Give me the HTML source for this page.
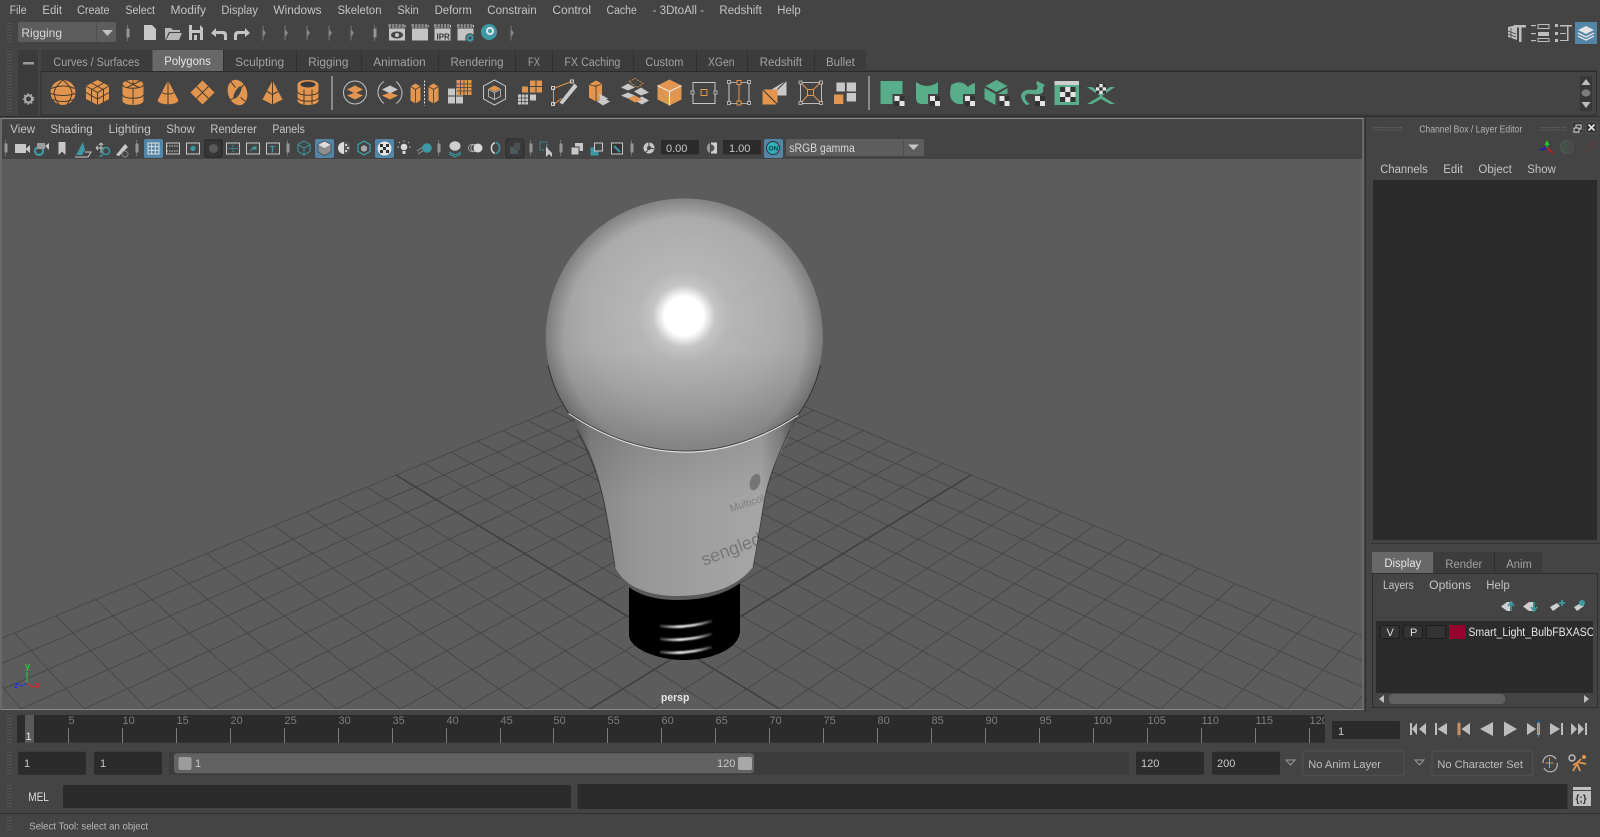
<!DOCTYPE html>
<html><head><meta charset="utf-8"><title>Maya</title>
<style>
html,body{margin:0;padding:0;background:#444;overflow:hidden;width:1600px;height:837px}
svg{display:block;font-family:"Liberation Sans",Arial,sans-serif}
.m{fill:#c4c4c4;font-size:11.5px}
.t{fill:#a2a2a2;font-size:11.5px}
.f{fill:#c8c8c8;font-size:11px}
.n{fill:#7d7d7d;font-size:11px}
</style></head><body>
<svg xmlns="http://www.w3.org/2000/svg" width="1600" height="837" viewBox="0 0 1600 837">
<defs>
<radialGradient id="gl" gradientUnits="userSpaceOnUse" cx="684" cy="316" r="175">
<stop offset="0" stop-color="#fff"/><stop offset=".112" stop-color="#fff"/><stop offset=".14" stop-color="#e6e6e6"/><stop offset=".18" stop-color="#c4c4c4"/><stop offset=".26" stop-color="#b6b6b6"/><stop offset=".55" stop-color="#acacac"/><stop offset=".8" stop-color="#9a9a9a"/><stop offset="1" stop-color="#868686"/>
</radialGradient>
<linearGradient id="gd" gradientUnits="userSpaceOnUse" x1="0" y1="350" x2="0" y2="470"><stop offset="0" stop-color="#000" stop-opacity="0"/><stop offset="1" stop-color="#000" stop-opacity=".2"/></linearGradient>
<radialGradient id="ge" gradientUnits="userSpaceOnUse" cx="684.3" cy="337" r="138.5"><stop offset=".86" stop-color="#000" stop-opacity="0"/><stop offset="1" stop-color="#000" stop-opacity=".2"/></radialGradient>
<linearGradient id="nk" gradientUnits="userSpaceOnUse" x1="568" y1="0" x2="798" y2="0"><stop offset="0" stop-color="#555"/><stop offset=".1" stop-color="#868686"/><stop offset=".3" stop-color="#969696"/><stop offset=".6" stop-color="#a0a0a0"/><stop offset=".84" stop-color="#a6a6a6"/><stop offset=".93" stop-color="#868686"/><stop offset="1" stop-color="#4a4a4a"/></linearGradient>
<linearGradient id="nk2" gradientUnits="userSpaceOnUse" x1="0" y1="430" x2="0" y2="500"><stop offset="0" stop-color="#000" stop-opacity=".1"/><stop offset="1" stop-color="#000" stop-opacity="0"/></linearGradient>
<linearGradient id="th" gradientUnits="userSpaceOnUse" x1="655" y1="0" x2="715" y2="0"><stop offset="0" stop-color="#fff" stop-opacity="0"/><stop offset=".4" stop-color="#e8e8e8"/><stop offset=".65" stop-color="#d8d8d8"/><stop offset="1" stop-color="#fff" stop-opacity="0"/></linearGradient>
<filter id="bl" x="-20%" y="-200%" width="140%" height="500%"><feGaussianBlur stdDeviation=".8"/></filter>
<clipPath id="cv"><rect x="2" y="159" width="1360" height="550"/></clipPath>
<clipPath id="cn"><path d="M568.5,413 Q684,489.4 798,415 C790,440 772,460 765,497 C759,530 757,550 753,567 C735,590 705,596 677,596 C650,596 625,588 615,567 C611,540 608,520 603,497 C596,460 585,440 568.5,413Z"/></clipPath>
<clipPath id="ct"><rect x="17" y="715" width="1308" height="28"/></clipPath>
<clipPath id="cl"><rect x="1376" y="621" width="217" height="30"/></clipPath>

<g id="s1"><circle r="12.5" fill="#e2954e"/><g fill="none" stroke="#4a3a2c" stroke-width="1"><path d="M-11.5,-4 Q0,-9 11.5,-4 M-12.5,1 Q0,5 12.5,1 M-10,7 Q0,11 10,7 M0,-12.5 Q-9,-5 -9,1 Q-8,7 -4,12 M0,-12.5 Q9,-5 9,1 Q8,7 4,12"/></g></g>
<g id="s2"><path d="M0,-12.5 L11.5,-6.5 V6.5 L0,12.5 L-11.5,6.5 V-6.5Z" fill="#e2954e"/><path d="M-11.5,-6.5 L0,0 L11.5,-6.5 M0,0 V12.5 M-6,-9.5 L5.5,-3 M6,-9.5 L-5.5,-3 M-11.5,0 L0,6.5 L11.5,0 M-6,-3 V9.5 M6,-3 V9.5" fill="none" stroke="#4a3a2c" stroke-width="1"/></g>
<g id="s3"><path d="M-10.5,-8 C-10.5,-14 10.5,-14 10.5,-8 V8 C10.5,14 -10.5,14 -10.5,8Z" fill="#e2954e"/><path d="M-10.5,-8 C-10.5,-3 10.5,-3 10.5,-8 M-10.5,2 C-10.5,7 10.5,7 10.5,2 M0,-5 V12 M0,-8 L-7,-11.5 M0,-8 L7,-11.5 M0,-8 V-12 M0,-8 L-6,-5 M0,-8 L6,-5" fill="none" stroke="#4a3a2c" stroke-width="1"/></g>
<g id="s4"><path d="M0,-12 L10.5,8 C9,13 -9,13 -10.5,8Z" fill="#e2954e"/><path d="M0,-12 V12 M-6,0 C-3,2 3,2 6,0" fill="none" stroke="#4a3a2c" stroke-width="1"/></g>
<g id="s5"><path d="M0,-12 L12,0 L0,12 L-12,0Z" fill="#e2954e"/><path d="M-6,-6 L6,6 M6,-6 L-6,6" stroke="#4a3a2c" stroke-width="1"/></g>
<g id="s6"><ellipse rx="9.5" ry="13" transform="rotate(-18)" fill="#e2954e"/><ellipse rx="2.5" ry="7" transform="rotate(30)" fill="#444"/><path d="M-7,-11 L-2,-5 M8,-10 L3,-4 M-8,8 L-3,5 M3,5 L8,9" stroke="#4a3a2c" stroke-width="1" fill="none"/></g>
<g id="s7"><path d="M0,-12 L10,7 L0,12 L-10,7Z" fill="#e2954e"/><path d="M0,-12 V12 M-5.5,-1 L0,2 L5.5,-1" fill="none" stroke="#4a3a2c" stroke-width="1"/></g>
<g id="s8"><path d="M-10.5,-8 C-10.5,-14 10.5,-14 10.5,-8 V8 C10.5,14 -10.5,14 -10.5,8Z" fill="#e2954e"/><ellipse cy="-8" rx="7.5" ry="3" fill="#3a3a3a"/><path d="M-10.5,-1 C-10.5,4 10.5,4 10.5,-1 M-10.5,5 C-10.5,10 10.5,10 10.5,5 M-4,-3 V12 M4,-3 V12" fill="none" stroke="#4a3a2c" stroke-width="1"/></g>
<g id="a1"><circle r="11.5" fill="none" stroke="#c4c4c4" stroke-width="1"/><path d="M0,-7 L8,-3 L0,1 L-8,-3Z" fill="#e2954e"/><path d="M0,0 L8,3 L0,7 L-8,3Z" fill="#e2954e"/></g>
<g id="a2"><path d="M-6,-11 A12,12 0 0 0 -10,6 M6,11 A12,12 0 0 0 10,-6 M-6,11 A12,12 0 0 1 -10,6 M6,-11 A12,12 0 0 1 10,-6" fill="none" stroke="#c4c4c4" stroke-width="1"/><path d="M0,-7 L8,-3 L0,1 L-8,-3Z" fill="#c8c8c8"/><path d="M0,0 L8,3 L0,7 L-8,3Z" fill="#e2954e"/></g>
<g id="a3"><path d="M-14,-6 L-9,-9 L-4,-6 V8 L-9,11 L-14,8Z M4,-6 L9,-9 L14,-6 V8 L9,11 L4,8Z" fill="#e2954e"/><path d="M-9,-3 V11 M9,-3 V11 M-14,-6 L-9,-3 L-4,-6 M4,-6 L9,-3 L14,-6" stroke="#4a3a2c" stroke-width=".8" fill="none"/><path d="M0,-12 V13" stroke="#ddd" stroke-width="1" stroke-dasharray="2 1.5"/></g>
<g id="a4"><rect x="-12" y="-4" width="15" height="15" fill="#c8c8c8"/><path d="M-4.5,-4 V11 M-12,3.5 H3" stroke="#444" stroke-width="1"/><rect x="-3.5" y="-12.5" width="15" height="15" fill="#e2954e"/><path d="M.5,-12.5 V2.5 M4,-12.5 V2.5 M7.5,-12.5 V2.5 M-3.5,-8.5 H11.5 M-3.5,-5 H11.5 M-3.5,-1.5 H11.5" stroke="#444" stroke-width=".8"/></g>
<g id="a5"><path d="M0,-12.5 L11,-6.5 V6.5 L0,12.5 L-11,6.5 V-6.5Z" fill="none" stroke="#c4c4c4" stroke-width="1"/><path d="M0,-7 L6,-4 L0,-1 L-6,-4Z" fill="#e2954e"/><path d="M-6,-3 L0,0 V7 L-6,4Z M6,-3 L0,0 V7 L6,4Z" fill="none" stroke="#c4c4c4" stroke-width=".8"/></g>
<g id="a6"><path d="M0,-12 H12 V0 H0Z M-2,-6 H-8 V0 H-2Z" fill="#e2954e"/><path d="M6,-12 V0 M0,-6 H12" stroke="#444"/><path d="M-12,2 H-2 V12 H-12Z M0,2 H6 V8 H0Z" fill="#c8c8c8"/><path d="M-8.5,2 V12 M-5,2 V12 M-12,5.5 H-2 M-12,9 H-2" stroke="#444" stroke-width=".8"/></g>
<g id="a7"><path d="M-12,-4 L6,-11 M-12,-4 V12 L-4,6" fill="none" stroke="#e2954e" stroke-width="1"/><path d="M-6,10 L9,-9 L12,-6 L-3,12Z" fill="#ccc"/><rect x="-14" y="-6" width="3" height="3" fill="none" stroke="#ccc"/><rect x="5" y="-12.5" width="3" height="3" fill="none" stroke="#ccc"/><rect x="-14" y="10" width="3" height="3" fill="none" stroke="#ccc"/></g>
<g id="a8"><path d="M-11,-8 L-4,-12 L2,-9 V6 L-4,9 L-11,5Z" fill="#e2954e"/><path d="M-4,-8 V9 M-11,-8 L-4,-6 L2,-9" stroke="#4a3a2c" fill="none" stroke-width=".8"/><path d="M3,5 L10,9 L3,13 L-3,9Z" fill="#c8c8c8"/><path d="M-1,1 L8,6 L1,10" fill="#c8c8c8"/></g>
<g id="a9"><path d="M-14,-5 L-7,-9 L0,-5 L-7,-2Z M-1,-1 L6,-5 L14,0 L6,3Z M-14,3 L-7,0 L0,3 L-7,6Z M0,8 L7,4 L14,8 L7,12Z" fill="#c8c8c8"/><path d="M-6,-11 L0,-14 L8,-9 L2,-5Z" fill="none" stroke="#e2954e" stroke-width=".8" stroke-dasharray="2 1"/><path d="M-7,6 L0,3 L7,7 L0,10Z" fill="#e2954e"/></g>
<g id="a10"><path d="M0,-13 L12,-7 V7 L0,13 L-12,7 V-7Z" fill="#e2954e"/><path d="M-12,-7 L0,-1 L12,-7 M0,-1 V13" stroke="#e8e8e8" stroke-width="1.2" fill="none"/></g>
<g id="a11"><rect x="-11" y="-10" width="22" height="21" fill="none" stroke="#c8c8c8"/><rect x="-3" y="-3" width="6" height="6" fill="none" stroke="#e2954e"/><rect x="-13" y="-1.5" width="3" height="3" fill="#444" stroke="#c8c8c8" stroke-width=".8"/><rect x="10" y="-1.5" width="3" height="3" fill="#444" stroke="#c8c8c8" stroke-width=".8"/></g>
<g id="a12"><path d="M-10,-10 V11 M10,-10 V11" stroke="#c8c8c8"/><path d="M0,-8 V9" stroke="#e2954e"/><g fill="#444" stroke="#c8c8c8" stroke-width=".8"><rect x="-11.5" y="-12" width="3" height="3"/><rect x="8.5" y="-12" width="3" height="3"/><rect x="-11.5" y="9" width="3" height="3"/><rect x="8.5" y="9" width="3" height="3"/></g><rect x="-2" y="-12" width="4" height="4" fill="#444" stroke="#e2954e"/><rect x="-2" y="8.5" width="4" height="4" fill="#444" stroke="#e2954e"/><path d="M-9,-10 H-2 M2,-10 H9 M-9,11 H-2 M2,11 H9" stroke="#c8c8c8" stroke-width=".8"/></g>
<g id="a13"><path d="M-12,-3 V12 H3 V-3Z" fill="#e2954e"/><path d="M-12,-3 L3,12" stroke="#333"/><path d="M-3,-3 L12,-12 V3 H3 V-3Z" fill="#c8c8c8"/><path d="M3,-3 L12,-12" stroke="#444"/></g>
<g id="a14"><rect x="-10" y="-10" width="21" height="21" fill="none" stroke="#c8c8c8" stroke-width=".9"/><path d="M-9,-9 L-3,-3 M9,-9 L3,-3 M-9,10 L-3,3 M10,10 L3,3" stroke="#e2954e"/><rect x="-3" y="-3" width="6" height="6" fill="none" stroke="#e2954e"/><g fill="#444" stroke="#c8c8c8" stroke-width=".8"><rect x="-11.5" y="-11.5" width="3" height="3"/><rect x="9" y="-11.5" width="3" height="3"/><rect x="-11.5" y="9" width="3" height="3"/><rect x="9" y="9" width="3" height="3"/></g></g>
<g id="a15"><rect x="-8.6" y="-10" width="8.5" height="9" fill="#c8c8c8"/><rect x="1.7" y="-10" width="9.3" height="9" fill="#c8c8c8"/><rect x="1.7" y="0.5" width="9.3" height="8.5" fill="#c8c8c8"/><rect x="-11" y="2" width="9.3" height="9.5" fill="#e2954e"/></g>
<g id="ck"><rect width="5" height="5" fill="#e4e4e4"/><rect x="5" y="5" width="5" height="5" fill="#e4e4e4"/><rect x="5" width="5" height="5" fill="#333"/><rect y="5" width="5" height="5" fill="#333"/></g>
<g id="b1"><path d="M-11,-12 H11 V11 H-11Z" fill="#58ae8a"/><rect x="1" y="1" width="11" height="11" fill="#444"/><use href="#ck" x="3" y="3"/></g>
<g id="b2"><path d="M-11,-11 Q0,-3 11,-11 V11 H-5 Q-11,11 -11,5Z" fill="#58ae8a"/><rect x="1" y="1" width="11" height="11" fill="#444"/><use href="#ck" x="3" y="3"/></g>
<g id="b3"><path d="M-11,-8 Q-1,-14 6,-6 Q9,-9 13,-10 V11 H-4 Q-12,9 -12,0Z" fill="#58ae8a"/><rect x="1" y="1" width="13" height="11" fill="#444"/><use href="#ck" x="3" y="3"/></g>
<g id="b4"><path d="M0,-13 L11,-7 L0,-1 L-11,-7Z M-12,-5 L-1,1 V12 L-12,6Z M1,1 L11,-5 V1 H1Z" fill="#58ae8a"/><use href="#ck" x="3" y="3"/></g>
<g id="b5"><path d="M-12,2 C-8,-7 2,-1 4,-4 C6,-7 2,-9 4,-12 L12,-8 C8,-5 12,-2 9,0 C2,4 -7,-3 -8,4 C-8,7 -6,9 -3,11 L-6,12 C-9,11 -12,6 -12,2Z" fill="#58ae8a"/><use href="#ck" x="2" y="3"/></g>
<g id="b6"><rect x="-12.5" y="-12" width="24.5" height="24" fill="#58ae8a"/><rect x="-12.5" y="-12" width="24.5" height="4" fill="#cfcfcf"/><rect x="-7" y="-6" width="15.5" height="15" fill="#e4e4e4"/><rect x="-7" y="-6" width="5.2" height="5" fill="#333"/><rect x="3.3" y="-6" width="5.2" height="5" fill="#333"/><rect x="-1.8" y="-1" width="5.2" height="5" fill="#333"/><rect x="-7" y="4" width="5.2" height="5" fill="#333"/><rect x="3.3" y="4" width="5.2" height="5" fill="#333"/></g>
<g id="b7"><path d="M-14,-8 H-9 L0,-2 L9,-8 H14 L1,1 L14,9 H9 L0,4 L-9,9 H-14 L-1,1Z" fill="#58ae8a"/><rect x="-5" y="-11" width="10" height="10" fill="#e4e4e4"/><rect x="-5" y="-11" width="3.3" height="3.3" fill="#333"/><rect x="1.7" y="-11" width="3.3" height="3.3" fill="#333"/><rect x="-1.7" y="-7.7" width="3.3" height="3.3" fill="#333"/><rect x="-5" y="-4.4" width="3.3" height="3.3" fill="#333"/><rect x="1.7" y="-4.4" width="3.3" height="3.3" fill="#333"/></g>
<g id="h1"><path d="M0,-7.5 V7.5" stroke="#777"/><path d="M0,-4 L3,0 L0,4Z" fill="#888"/></g>
<g id="h2"><path d="M.5,-8 V8" stroke="#6f6f6f"/><rect x="-.5" y="-4.5" width="3" height="9" fill="#969696"/></g>
<g id="cb"><path d="M-8,-8 H8 V-6 H-8Z" fill="none" stroke="#ccc" stroke-width="1" stroke-dasharray="2.2 1"/><rect x="-8" y="-4.5" width="16" height="12" fill="#c4c4c4"/></g>
</defs>

<rect width="1600" height="837" fill="#444"/>

<!-- Top menu -->
<g lengthAdjust="spacingAndGlyphs">
<text class="m" x="9.6" y="14" textLength="17" lengthAdjust="spacingAndGlyphs">File</text>
<text class="m" x="42.4" y="14" textLength="19.6" lengthAdjust="spacingAndGlyphs">Edit</text>
<text class="m" x="77.1" y="14" textLength="32.4" lengthAdjust="spacingAndGlyphs">Create</text>
<text class="m" x="125.4" y="14" textLength="29.6" lengthAdjust="spacingAndGlyphs">Select</text>
<text class="m" x="170.5" y="14" textLength="35.5" lengthAdjust="spacingAndGlyphs">Modify</text>
<text class="m" x="221.4" y="14" textLength="36.5" lengthAdjust="spacingAndGlyphs">Display</text>
<text class="m" x="273.4" y="14" textLength="48.2" lengthAdjust="spacingAndGlyphs">Windows</text>
<text class="m" x="337.5" y="14" textLength="44" lengthAdjust="spacingAndGlyphs">Skeleton</text>
<text class="m" x="397.4" y="14" textLength="21.4" lengthAdjust="spacingAndGlyphs">Skin</text>
<text class="m" x="434.6" y="14" textLength="37.2" lengthAdjust="spacingAndGlyphs">Deform</text>
<text class="m" x="487.3" y="14" textLength="49.3" lengthAdjust="spacingAndGlyphs">Constrain</text>
<text class="m" x="552.4" y="14" textLength="38.6" lengthAdjust="spacingAndGlyphs">Control</text>
<text class="m" x="606.5" y="14" textLength="30.3" lengthAdjust="spacingAndGlyphs">Cache</text>
<text class="m" x="652.6" y="14" textLength="51.4" lengthAdjust="spacingAndGlyphs">- 3DtoAll -</text>
<text class="m" x="719.4" y="14" textLength="42.4" lengthAdjust="spacingAndGlyphs">Redshift</text>
<text class="m" x="777.3" y="14" textLength="23.4" lengthAdjust="spacingAndGlyphs">Help</text>
</g>

<!-- status line -->
<path d="M8,23 V42 M11,23 V42 M8,51 V112 M11,51 V112" stroke="#6c6c6c" stroke-dasharray="1 2"/>
<rect x="18" y="22" width="98" height="20" rx="2" fill="#5d5d5d"/><rect x="96" y="22" width="1" height="20" fill="#505050"/>
<text class="m" style="fill:#d8d8d8;font-size:12px" x="21.4" y="37" textLength="40.6" lengthAdjust="spacingAndGlyphs">Rigging</text>
<path d="M102,30 H113 L107.5,36Z" fill="#c0c0c0"/>
<use href="#h2" x="127" y="33"/>
<path d="M144,25 H152 L156,29 V40 H144Z" fill="#c8c8c8"/>
<path d="M165,28 H171 L173,30 H180 V32 H169 L165,40Z M170,33 H182 L179,40 H166Z" fill="#b8b8b8"/>
<path d="M189,25 H200 L203,28 V40 H189Z" fill="#c4c4c4"/><rect x="192" y="25" width="8" height="5" fill="#444"/><rect x="192" y="33" width="8" height="7" fill="#444"/><rect x="194" y="35" width="3" height="5" fill="#c4c4c4"/>
<path d="M211,33 L216,28 V31 H223 Q227,31 227,35 V40 H224 V36 Q224,34 222,34 H216 V37Z" fill="#c4c4c4"/>
<path d="M250,33 L245,28 V31 H238 Q234,31 234,35 V40 H237 V36 Q237,34 239,34 H245 V37Z" fill="#c4c4c4"/>
<use href="#h1" x="263" y="33"/><use href="#h1" x="285" y="33"/><use href="#h1" x="307" y="33"/><use href="#h1" x="329" y="33"/><use href="#h1" x="351" y="33"/>
<use href="#h2" x="374" y="33"/>
<use href="#cb" x="397" y="33"/><ellipse cx="397" cy="35" rx="6" ry="3.5" fill="#444"/><circle cx="397" cy="35" r="2" fill="#c4c4c4"/>
<use href="#cb" x="420" y="33"/>
<use href="#cb" x="442.5" y="33"/><text x="436.5" y="39.5" style="font-size:8px;fill:#333;font-weight:bold">IPR</text>
<use href="#cb" x="465.5" y="33"/><circle cx="470" cy="38" r="4.2" fill="#3d9aa5" stroke="#444"/><circle cx="470" cy="38" r="1.5" fill="#444"/>
<circle cx="489" cy="32" r="8" fill="#3d9aa5"/><circle cx="490" cy="31" r="4" fill="#e4e4e4"/><circle cx="490" cy="31" r="2" fill="#3d9aa5"/>
<use href="#h1" x="511" y="33"/>

<!-- workspace icons -->
<g fill="#bdbdbd"><path d="M1508,27 L1517,25 V40 L1508,37Z"/><rect x="1514" y="25" width="12" height="2.5"/><rect x="1519" y="27" width="2.5" height="15"/></g>
<path d="M1508,31 L1516,34 M1508,34 L1516,37 M1511,28 V39" stroke="#444" stroke-width=".8"/>
<g fill="#bdbdbd"><rect x="1531" y="25" width="5" height="1.2"/><rect x="1538" y="24.5" width="11" height="4" fill="none" stroke="#bdbdbd"/><rect x="1531" y="33" width="5" height="1.2"/><rect x="1538" y="32" width="11" height="4"/><rect x="1531" y="40" width="5" height="1.2"/><rect x="1538" y="38.5" width="11" height="3" fill="none" stroke="#bdbdbd"/></g>
<g fill="#bdbdbd"><rect x="1555" y="24" width="3" height="3"/><rect x="1555" y="32" width="3" height="3"/><rect x="1555" y="39" width="3" height="3"/><rect x="1560" y="25" width="12" height="1.5"/><rect x="1567" y="25" width="1.5" height="16"/><rect x="1560" y="33" width="6" height="1"/><rect x="1560" y="40" width="7" height="1"/></g>
<rect x="1575" y="22" width="22" height="22" fill="#5285a6"/>
<path d="M1586,26 L1594,30 L1586,34 L1578,30Z" fill="#e4e4e4"/><path d="M1578,33 L1586,37 L1594,33 M1578,36 L1586,40 L1594,36" fill="none" stroke="#e4e4e4" stroke-width="1.3"/>

<!-- Shelf -->
<rect x="18" y="50" width="20" height="65" fill="#3b3b3b"/>
<rect x="23" y="62" width="11" height="2.5" fill="#9a9a9a"/>
<circle cx="28.5" cy="99" r="3.6" fill="none" stroke="#a8a8a8" stroke-width="2.2"/><circle cx="28.5" cy="99" r="5.2" fill="none" stroke="#a8a8a8" stroke-width="1.2" stroke-dasharray="1.6 2.2"/>
<rect x="41" y="71" width="1555.5" height="44" fill="#444" stroke="#2f2f2f"/>
<path d="M41,50 H866 V71 H41Z" fill="#3c3c3c"/>
<rect x="152.5" y="50" width="71" height="21" fill="#686868"/>
<g stroke="#303030"><path d="M223.5,50V71M296.5,50V71M361.5,50V71M438.5,50V71M515.5,50V71M552.5,50V71M633.5,50V71M696.5,50V71M747.5,50V71M814.5,50V71"/></g>
<path d="M41,71.5 H1596" stroke="#2c2c2c"/>
<text class="t" x="53.4" y="66" textLength="86" lengthAdjust="spacingAndGlyphs">Curves / Surfaces</text>
<text class="t" style="fill:#e6e6e6" x="164.3" y="65" textLength="46.5" lengthAdjust="spacingAndGlyphs">Polygons</text>
<text class="t" x="235.2" y="66" textLength="49" lengthAdjust="spacingAndGlyphs">Sculpting</text>
<text class="t" x="308.2" y="66" textLength="40.3" lengthAdjust="spacingAndGlyphs">Rigging</text>
<text class="t" x="373.3" y="66" textLength="52.4" lengthAdjust="spacingAndGlyphs">Animation</text>
<text class="t" x="450.5" y="66" textLength="53" lengthAdjust="spacingAndGlyphs">Rendering</text>
<text class="t" x="528" y="66" textLength="12" lengthAdjust="spacingAndGlyphs">FX</text>
<text class="t" x="564.4" y="66" textLength="56" lengthAdjust="spacingAndGlyphs">FX Caching</text>
<text class="t" x="645.4" y="66" textLength="38" lengthAdjust="spacingAndGlyphs">Custom</text>
<text class="t" x="708" y="66" textLength="26.5" lengthAdjust="spacingAndGlyphs">XGen</text>
<text class="t" x="759.7" y="66" textLength="42.4" lengthAdjust="spacingAndGlyphs">Redshift</text>
<text class="t" x="826" y="66" textLength="28.8" lengthAdjust="spacingAndGlyphs">Bullet</text>
<use href="#s1" x="63" y="92.5"/><use href="#s2" x="97.5" y="92.5"/><use href="#s3" x="133" y="92.5"/><use href="#s4" x="168" y="92.5"/><use href="#s5" x="202.5" y="92.5"/><use href="#s6" x="237.5" y="92.5"/><use href="#s7" x="272.5" y="92.5"/><use href="#s8" x="308" y="92.5"/>
<rect x="331" y="76" width="2" height="34" fill="#8a8a8a"/>
<use href="#a1" x="355" y="92.5"/><use href="#a2" x="390" y="92.5"/><use href="#a3" x="424.5" y="92.5"/><use href="#a4" x="460" y="92.5"/><use href="#a5" x="494.5" y="92.5"/><use href="#a6" x="530" y="92.5"/><use href="#a7" x="565.5" y="92.5"/><use href="#a8" x="600" y="92.5"/><use href="#a9" x="635" y="92.5"/><use href="#a10" x="669.5" y="92.5"/><use href="#a11" x="704" y="92.5"/><use href="#a12" x="739" y="92.5"/><use href="#a13" x="774.5" y="92.5"/><use href="#a14" x="810.5" y="92.5"/><use href="#a15" x="845" y="92.5"/>
<rect x="868" y="76" width="2" height="34" fill="#8a8a8a"/>
<use href="#b1" x="891.5" y="93"/><use href="#b2" x="927" y="93"/><use href="#b3" x="962" y="93"/><use href="#b4" x="996.5" y="93"/><use href="#b5" x="1033" y="93"/><use href="#b6" x="1067" y="93"/><use href="#b7" x="1101" y="95"/>
<rect x="1580" y="76" width="12" height="35" fill="#383838"/>
<path d="M1581.5,85 L1586,79 L1590.5,85Z M1581.5,102 L1586,108 L1590.5,102Z" fill="#bdbdbd"/><ellipse cx="1586" cy="93" rx="4.5" ry="3.6" fill="#7c7c7c"/>

<!-- viewport frame -->
<rect x="1" y="118.5" width="1362" height="591" fill="#444" stroke="#888" stroke-width="1.1"/>
<rect x="2" y="159" width="1360" height="550" fill="#5c5c5c"/>
<path d="M1365.5,117 V712" stroke="#2e2e2e"/>
<path d="M0,116.5 H1600" stroke="#2d2d2d"/>
<text class="m" x="10.3" y="133" textLength="24.8" lengthAdjust="spacingAndGlyphs">View</text>
<text class="m" x="50.3" y="133" textLength="42.4" lengthAdjust="spacingAndGlyphs">Shading</text>
<text class="m" x="108.5" y="133" textLength="42.4" lengthAdjust="spacingAndGlyphs">Lighting</text>
<text class="m" x="166.3" y="133" textLength="28.6" lengthAdjust="spacingAndGlyphs">Show</text>
<text class="m" x="210.4" y="133" textLength="46.5" lengthAdjust="spacingAndGlyphs">Renderer</text>
<text class="m" x="272.4" y="133" textLength="32.4" lengthAdjust="spacingAndGlyphs">Panels</text>
<!-- viewport toolbar -->
<use href="#h2" x="5" y="148"/>
<rect x="15" y="144" width="11" height="9" fill="#c8c8c8"/><path d="M26,148.5 L30,145 V153 L26,149.5Z" fill="#c8c8c8"/>
<circle cx="39" cy="151" r="4" fill="none" stroke="#3d9aa5" stroke-width="2.2"/><rect x="37" y="143" width="8" height="6" fill="#9a9a9a"/><path d="M45,146 L49,143 V150Z" fill="#c8c8c8"/>
<path d="M58.5,142 H65.5 V155 L62,151.5 L58.5,155Z" fill="#c8c8c8"/>
<path d="M76,155 L83,142 L85,150 L82,155Z" fill="#3d9aa5"/><path d="M75,157 L88,157 L91,152 L85,152" fill="none" stroke="#c8c8c8"/>
<path d="M96,148 H105 M101,143 V153 M96,148 l2,-2 M96,148 l2,2 M101,143 l-2,2 M101,143 l2,2" stroke="#c8c8c8" fill="none"/><circle cx="106" cy="151" r="3.5" fill="none" stroke="#3d9aa5" stroke-width="1.5"/><path d="M103,154 L100,157" stroke="#3d9aa5" stroke-width="1.5"/>
<path d="M116,155 L125,144 L128,147 L119,156Z" fill="#c8c8c8"/><circle cx="125" cy="154" r="3" fill="none" stroke="#888"/>
<use href="#h2" x="136" y="148"/>
<rect x="144" y="139" width="19" height="19" rx="2" fill="#5285a6"/><rect x="148" y="143" width="11" height="11" fill="none" stroke="#e4e4e4"/><path d="M151.7,143V154M155.3,143V154M148,146.7H159M148,150.3H159" stroke="#e4e4e4" stroke-width=".9"/>
<rect x="166.5" y="143" width="13" height="11" fill="none" stroke="#c8c8c8"/><path d="M166.5,146 H179.5 M166.5,151 H179.5" stroke="#c8c8c8" stroke-dasharray="1.5 1"/>
<rect x="186.5" y="143" width="13" height="11" fill="none" stroke="#c8c8c8"/><circle cx="193" cy="148.5" r="2.5" fill="#3d9aa5"/>
<rect x="204" y="139" width="19" height="19" rx="2" fill="#363636"/><rect x="205" y="140" width="17" height="17" rx="2" fill="none" stroke="#2a2a2a"/><circle cx="213.5" cy="148.5" r="4.5" fill="#5a5a5a"/>
<rect x="226.5" y="143" width="13" height="11" fill="none" stroke="#c8c8c8"/><path d="M233,143V154M226.5,148.5H239.5" stroke="#3d9aa5" stroke-dasharray="1.5 1"/>
<rect x="246.5" y="143" width="13" height="11" fill="none" stroke="#c8c8c8"/><path d="M250,151 L253,148 M253,147h3v2h-3z" stroke="#3d9aa5" fill="#3d9aa5"/>
<rect x="266.5" y="143" width="13" height="11" fill="none" stroke="#c8c8c8"/><text x="269.5" y="152.5" style="font-size:9.5px;font-weight:bold;fill:#3d9aa5">T</text>
<use href="#h2" x="287" y="148"/>
<path d="M304,141 L310,144.5 V151.5 L304,155 L298,151.5 V144.5Z M298,144.5 L304,148 L310,144.5 M304,148 V155" fill="none" stroke="#3d9aa5" stroke-width="1"/>
<rect x="315" y="139" width="19" height="19" rx="2" fill="#5285a6"/><path d="M324.5,141 L331,144.5 V152 L324.5,155.5 L318,152 V144.5Z" fill="#8e8e8e"/><path d="M324.5,141 L331,144.5 L324.5,148 L318,144.5Z" fill="#dcdcdc"/><path d="M324.5,141 L331,144.5 V152 L324.5,155.5 L318,152 V144.5Z" fill="none" stroke="#333" stroke-width=".6"/>
<circle cx="344" cy="148" r="6" fill="#dcdcdc"/><path d="M344,142 A6,6 0 0 1 344,154Z" fill="#555"/><rect x="345" y="144" width="2" height="2" fill="#ccc"/><rect x="347" y="147" width="2" height="2" fill="#ccc"/><rect x="345" y="150" width="2" height="2" fill="#ccc"/>
<path d="M364,141 L370,144.5 V151.5 L364,155 L358,151.5 V144.5Z" fill="none" stroke="#3d9aa5" stroke-width="1.4"/><path d="M364,145 L367,147 V150 L364,152 L361,150 V147Z" fill="#aaa"/>
<rect x="375" y="139" width="19" height="19" rx="2" fill="#5285a6"/><circle cx="384.5" cy="148.5" r="7" fill="#e4e4e4"/><g fill="#333"><rect x="380" y="144" width="3" height="3"/><rect x="386" y="144" width="3" height="3"/><rect x="383" y="147" width="3" height="3"/><rect x="380" y="150" width="3" height="3"/><rect x="386" y="150" width="3" height="3"/></g>
<circle cx="404" cy="147" r="3.3" fill="#d8d8d8"/><rect x="402.5" y="151" width="3" height="3" fill="#d8d8d8"/><path d="M404,140.5 V142 M397.5,147 H399 M409,147 H410.5 M399,142 L400,143 M409,142 L408,143" stroke="#bbb"/>
<path d="M417,151 L423,147 M418,154 L424,150" stroke="#999"/><circle cx="427" cy="148" r="4.8" fill="#3d9aa5"/>
<use href="#h2" x="438" y="148"/>
<ellipse cx="455" cy="146" rx="5.5" ry="4.8" fill="#cfcfcf"/><path d="M449,152 L455,155 L461,152 M449,154 L455,157 L461,154" stroke="#3d9aa5" fill="none"/>
<circle cx="472" cy="148" r="3.6" fill="none" stroke="#999"/><circle cx="474.5" cy="148" r="3.6" fill="none" stroke="#aaa"/><circle cx="478" cy="148" r="4.5" fill="#d8d8d8"/>
<path d="M495,142.5 A6,6 0 0 0 495,153.5" fill="none" stroke="#d8d8d8" stroke-width="1.5"/><path d="M496,142.5 A6,6 0 0 1 496,153.5" fill="none" stroke="#3d9aa5" stroke-width="1.5"/>
<rect x="506" y="139" width="18" height="19" rx="2" fill="#3a3a3a" stroke="#2c2c2c"/><rect x="510" y="147" width="8" height="7" fill="#4a5a5e"/><rect x="514" y="143" width="6" height="7" fill="#4a4f52"/>
<use href="#h2" x="530" y="148"/>
<rect x="540" y="142" width="7" height="8" fill="none" stroke="#3d9aa5" stroke-dasharray="2 1"/><path d="M546,146 V157 L549,154 L552,157 L552,153 L549,150Z" fill="#c8c8c8"/>
<use href="#h2" x="560" y="148"/>
<rect x="575" y="143" width="8" height="8" fill="#c8c8c8"/><rect x="571" y="147" width="8" height="8" fill="#c8c8c8" stroke="#444"/>
<rect x="590.5" y="147.5" width="8" height="8" fill="#3d9aa5"/><rect x="594.5" y="143" width="8" height="8" fill="#444" stroke="#c8c8c8"/>
<rect x="611.5" y="143" width="11" height="11" fill="#333" stroke="#c8c8c8"/><path d="M614,146 L620,152" stroke="#3d9aa5" stroke-width="2"/>
<use href="#h2" x="631" y="148"/>
<circle cx="649" cy="148" r="5.5" fill="#c8c8c8"/><circle cx="649" cy="148" r="2" fill="#444"/><path d="M649,142 V146 M654,149 L651,148 M645,153 L648,150" stroke="#444"/>
<rect x="661" y="140" width="38" height="14.5" rx="1.5" fill="#2b2b2b"/><text class="f" x="666" y="152">0.00</text>
<path d="M710,143 A5.5,5.5 0 0 0 710,153Z" fill="#999"/><rect x="711" y="142.5" width="6" height="11" fill="#d0d0d0"/><path d="M711,144.5 A3.5,3.5 0 0 1 711,151.5Z" fill="#555"/>
<rect x="723" y="140" width="38" height="14.5" rx="1.5" fill="#2b2b2b"/><text class="f" x="729" y="152">1.00</text>
<rect x="764" y="139" width="19" height="19" rx="2" fill="#5285a6"/><circle cx="773" cy="148" r="6.5" fill="#2fb0bd" stroke="#333" stroke-width="1"/><text x="768.5" y="150.5" style="font-size:6.5px;fill:#16393f;font-weight:bold">ON</text>
<rect x="786" y="139" width="138" height="17" rx="1.5" fill="#5d5d5d"/><rect x="903" y="139" width="1" height="17" fill="#4e4e4e"/>
<text class="m" style="fill:#d8d8d8;font-size:11.5px" x="789.3" y="152" textLength="65.5" lengthAdjust="spacingAndGlyphs">sRGB gamma</text>
<path d="M908,144.5 H919 L913.5,150Z" fill="#c4c4c4"/>

<!-- 3D view -->
<g clip-path="url(#cv)">
<g id="grid" fill="none"></g>
<!-- bulb -->
<circle cx="684.3" cy="337" r="138.5" fill="url(#gl)"/>
<circle cx="684.3" cy="337" r="138.5" fill="url(#gd)"/>
<circle cx="684.3" cy="337" r="138.5" fill="url(#ge)"/>
<path d="M548,365 A138.5,138.5 0 0 0 568.5,413 M820.5,365 A138.5,138.5 0 0 1 798,415" fill="none" stroke="#111" stroke-width=".9" opacity=".65"/>
<!-- socket -->
<path d="M629,578 V636 C631,650 660,660 684,660 C710,660 738,650 740,632 V578Z" fill="#000"/>
<g fill="none" stroke="url(#th)" stroke-width="2.6" filter="url(#bl)">
<path d="M660,626 Q685,629 712,621"/>
<path d="M660,639 Q685,642 712,634"/>
<path d="M660,652 Q685,655 712,647"/>
</g>
<path d="M615,570 C625,592 650,600 677,600 C705,600 735,594 753,570Z" fill="#5a5a5a"/>
<!-- neck -->
<path d="M568.5,413 Q684,489.4 798,415 C790,440 772,460 765,497 C759,530 757,550 753,567 C735,590 705,596 677,596 C650,596 625,588 615,567 C611,540 608,520 603,497 C596,460 585,440 568.5,413Z" fill="url(#nk)"/>
<g clip-path="url(#cn)">
<rect x="560" y="410" width="250" height="100" fill="url(#nk2)"/>
<ellipse cx="755" cy="482" rx="5" ry="8.5" transform="rotate(18 755 482)" fill="#757575"/>
<text transform="translate(731,512) rotate(-18)" style="font-size:10.5px;fill:#7e7e7e">Multicolor</text>
<text transform="translate(704,566) rotate(-21)" style="font-size:18px;fill:#777">sengled</text>
</g>
<path d="M577,430 C592,458 598,478 603,497 C608,520 611,540 615,567" fill="none" stroke="#1a1a1a" stroke-width=".9" opacity=".6"/>
<path d="M790,430 C776,458 769,478 765,497 C760,525 757,548 753,567" fill="none" stroke="#1a1a1a" stroke-width=".9" opacity=".6"/>
<path d="M568.5,412.4 Q684,488.6 798,414.4" fill="none" stroke="#222" stroke-width=".8" opacity=".7"/>
<path d="M568.5,413.5 Q684,489.9 798,415.5" fill="none" stroke="#e8e8e8" stroke-width="1"/>
<text x="661" y="701" textLength="28.3" lengthAdjust="spacingAndGlyphs" style="font-size:11px;font-weight:bold;fill:#e8e8e8">persp</text>
<path d="M27,672 V683" stroke="#22cc44"/><path d="M27,683 L22,686 L19,685" stroke="#2233dd" fill="none"/><path d="M27,683 L32,687 L35,686" stroke="#dd2222" fill="none"/>
<text x="25" y="669" style="font-size:9.5px;font-weight:bold;fill:#22cc44">y</text>
<text x="14" y="688" style="font-size:9.5px;font-weight:bold;fill:#2233dd">z</text>
<text x="35" y="688" style="font-size:9.5px;font-weight:bold;fill:#dd2222">x</text>
</g>

<!-- Channel box -->
<path d="M1374,127V131M1377,127V131M1380,127V131M1383,127V131M1386,127V131M1389,127V131M1392,127V131M1395,127V131M1398,127V131M1401,127V131M1541,127V131M1544,127V131M1547,127V131M1550,127V131M1553,127V131M1556,127V131M1559,127V131M1562,127V131M1565,127V131" stroke="#777" stroke-dasharray="1 1.5"/>
<text x="1419.2" y="132.5" textLength="103" lengthAdjust="spacingAndGlyphs" style="font-size:10px;fill:#b4b4b4">Channel Box / Layer Editor</text>
<rect x="1572" y="122" width="11" height="11" rx="2" fill="#333" stroke="#555"/><rect x="1576" y="125" width="5" height="4" fill="none" stroke="#ddd"/><rect x="1574" y="128" width="5" height="4" fill="#333" stroke="#ddd"/>
<rect x="1586" y="122" width="11" height="11" rx="2" fill="#333" stroke="#555"/><path d="M1588.5,124.5 L1594.5,130.5 M1594.5,124.5 L1588.5,130.5" stroke="#e4e4e4" stroke-width="1.6"/>
<path d="M1547,148 V142" stroke="#2a2" stroke-width="2"/><path d="M1544.5,145 L1547,140 L1549.5,145Z" fill="#2c2"/><path d="M1547,148 L1540,150" stroke="#22a" stroke-width="2"/><path d="M1547,148 L1553,153" stroke="#b22" stroke-width="2"/>
<circle cx="1567" cy="147" r="6.5" fill="#3f5445" stroke="#575757"/><path d="M1567,140.5 A6.5,6.5 0 0 1 1567,153.5Z" fill="#4a4a4a"/>
<path d="M1584,153 L1594,143" stroke="#5a3a3a" stroke-width="1.5"/><path d="M1591,141 L1596,141 L1595,146" fill="#5a3a3a"/>
<text class="m" x="1380.3" y="173" textLength="47.5" lengthAdjust="spacingAndGlyphs">Channels</text>
<text class="m" x="1443.3" y="173" textLength="19.6" lengthAdjust="spacingAndGlyphs">Edit</text>
<text class="m" x="1478.4" y="173" textLength="33.4" lengthAdjust="spacingAndGlyphs">Object</text>
<text class="m" x="1527.3" y="173" textLength="28.6" lengthAdjust="spacingAndGlyphs">Show</text>
<rect x="1373" y="180" width="224" height="360" fill="#2b2b2b"/>
<path d="M1371,543.5 H1600" stroke="#333"/>

<!-- Layer Editor -->
<rect x="1372.5" y="573.5" width="225" height="134" fill="none" stroke="#2e2e2e"/>
<rect x="1372" y="552" width="61" height="21" fill="#686868"/>
<path d="M1433.5,552 H1542 V573 H1433.5Z" fill="#3c3c3c"/>
<path d="M1494.5,552 V573" stroke="#2e2e2e"/>
<text class="t" style="fill:#e6e6e6" x="1384.4" y="567" textLength="36.9" lengthAdjust="spacingAndGlyphs">Display</text>
<text class="t" x="1445.4" y="568" textLength="36.8" lengthAdjust="spacingAndGlyphs">Render</text>
<text class="t" x="1506.3" y="568" textLength="25.5" lengthAdjust="spacingAndGlyphs">Anim</text>
<text class="m" x="1383" y="589" textLength="30.7" lengthAdjust="spacingAndGlyphs">Layers</text>
<text class="m" x="1429.2" y="589" textLength="41.7" lengthAdjust="spacingAndGlyphs">Options</text>
<text class="m" x="1486.3" y="589" textLength="23.4" lengthAdjust="spacingAndGlyphs">Help</text>
<g fill="#cfcfcf"><path d="M1501,606.5 L1507,602 L1510,602 V611 L1507,611Z"/><path d="M1523,606.5 L1529,602 L1533,602 V611 L1529,611Z"/><path d="M1550,607 L1557,603 L1560,606 L1553,611Z"/><path d="M1574,607 L1581,603 L1584,606 L1577,611Z"/></g>
<path d="M1511,611 V603 M1508,606 L1511,602 L1514,606" stroke="#3d9aa5" fill="none" stroke-width="1.6"/>
<path d="M1534,602 V610 M1531,607 L1534,611 L1537,607" stroke="#3d9aa5" fill="none" stroke-width="1.6"/>
<path d="M1562,600 V606 M1559,603 H1565" stroke="#3d9aa5" stroke-width="1.8"/>
<circle cx="1582" cy="603" r="3" fill="#3d9aa5"/>
<rect x="1376" y="621" width="217" height="72" fill="#2b2b2b"/>
<rect x="1380.5" y="625.5" width="19" height="13" rx="2" fill="#333" stroke="#1e1e1e"/><text x="1386.5" y="636" style="font-size:11px;fill:#dcdcdc">V</text>
<rect x="1403.5" y="625.5" width="19" height="13" rx="2" fill="#333" stroke="#1e1e1e"/><text x="1410" y="636" style="font-size:11px;fill:#dcdcdc">P</text>
<rect x="1426.5" y="625.5" width="19" height="13" rx="2" fill="#333" stroke="#1e1e1e"/>
<rect x="1449" y="625" width="16" height="14" fill="#96002e"/>
<g clip-path="url(#cl)"><text x="1468.4" y="636" textLength="126" lengthAdjust="spacingAndGlyphs" style="font-size:11.5px;fill:#e6e6e6">Smart_Light_BulbFBXASC</text></g>
<rect x="1389" y="694" width="116" height="10" rx="4" fill="#606060"/>
<path d="M1384,695 L1379,699 L1384,703Z M1584,695 L1589,699 L1584,703Z" fill="#bdbdbd"/>

<!-- Timeline -->
<path d="M8,715 V743 M11,715 V743 M8,752 V775 M11,752 V775 M8,785 V807 M11,785 V807 M8,817 V832 M11,817 V832" stroke="#6c6c6c" stroke-dasharray="1 2"/>
<rect x="17" y="715" width="1308" height="27.7" fill="#2b2b2b"/>
<rect x="25" y="715" width="9" height="27.7" fill="#5a5a5a"/>
<text x="25.5" y="740" style="font-size:11px;fill:#e6e6e6">1</text>
<path d="M68.5,728V743M122.5,728V743M176.5,728V743M230.5,728V743M284.5,728V743M338.5,728V743M392.5,728V743M446.5,728V743M500.5,728V743M553.5,728V743M607.5,728V743M661.5,728V743M715.5,728V743M769.5,728V743M823.5,728V743M877.5,728V743M931.5,728V743M985.5,728V743M1039.5,728V743M1093.5,728V743M1147.5,728V743M1201.5,728V743M1255.5,728V743M1309.5,728V743" stroke="#7a7a7a"/>
<g clip-path="url(#ct)">
<text class="n" x="68.5" y="724">5</text><text class="n" x="122.5" y="724">10</text><text class="n" x="176.5" y="724">15</text><text class="n" x="230.5" y="724">20</text><text class="n" x="284.5" y="724">25</text><text class="n" x="338.5" y="724">30</text><text class="n" x="392.5" y="724">35</text><text class="n" x="446.5" y="724">40</text><text class="n" x="500.5" y="724">45</text><text class="n" x="553.5" y="724">50</text><text class="n" x="607.5" y="724">55</text><text class="n" x="661.5" y="724">60</text><text class="n" x="715.5" y="724">65</text><text class="n" x="769.5" y="724">70</text><text class="n" x="823.5" y="724">75</text><text class="n" x="877.5" y="724">80</text><text class="n" x="931.5" y="724">85</text><text class="n" x="985.5" y="724">90</text><text class="n" x="1039.5" y="724">95</text><text class="n" x="1093.5" y="724">100</text><text class="n" x="1147.5" y="724">105</text><text class="n" x="1201.5" y="724">110</text><text class="n" x="1255.5" y="724">115</text><text class="n" x="1309.5" y="724">120</text>
</g>
<rect x="1332" y="721" width="68" height="18" rx="1.5" fill="#2b2b2b"/><text class="f" x="1338" y="735">1</text>
<g fill="#bdbdbd" transform="translate(0,729)">
<path d="M1410,-6 h2 v12 h-2z M1417,-6 L1412,0 L1417,6z M1426,-6 L1419,0 L1426,6z"/>
<path d="M1435,-6 h2 v12 h-2z M1447,-6 L1437.5,0 L1447,6z"/>
<rect x="1457.5" y="-6" width="3" height="12" fill="#e2954e"/><path d="M1459,-8 V8" stroke="#888" stroke-width=".8"/><path d="M1470,-6 L1461.5,0 L1470,6z"/>
<path d="M1493,-7 L1480,0 L1493,7z"/>
<path d="M1504,-7.5 L1517,0 L1504,7.5z"/>
<path d="M1527,-6 L1536,0 L1527,6z"/><rect x="1537" y="-6" width="3" height="12" fill="#e2954e"/><path d="M1538.5,-8 V8" stroke="#888" stroke-width=".8"/>
<path d="M1550,-6 L1560,0 L1550,6z M1561,-6 h2 v12 h-2z"/>
<path d="M1571,-6 L1577,0 L1571,6z M1578,-6 L1584,0 L1578,6z M1585,-6 h2 v12 h-2z"/>
</g>

<!-- Range slider row -->
<rect x="18" y="751.7" width="68" height="23" rx="2" fill="#2b2b2b"/><text class="f" x="24" y="767">1</text>
<rect x="94" y="751.7" width="68" height="23" rx="2" fill="#2b2b2b"/><text class="f" x="100" y="767">1</text>
<rect x="169" y="751.7" width="960" height="23" fill="#3c3c3c"/>
<rect x="174" y="753.3" width="580" height="20" rx="3" fill="#626262"/>
<rect x="178.5" y="757" width="13" height="13" rx="2" fill="#9c9c9c"/>
<text class="f" x="195" y="767">1</text>
<text class="f" x="717" y="767">120</text>
<rect x="738" y="757" width="14" height="13" rx="2" fill="#a8a8a8"/>
<rect x="1136" y="751.7" width="68" height="23" rx="2" fill="#2b2b2b"/><text class="f" x="1141" y="767">120</text>
<rect x="1212" y="751.7" width="68" height="23" rx="2" fill="#2b2b2b"/><text class="f" x="1217" y="767">200</text>
<path d="M1286,760 H1295 L1290.5,765Z M1415,760 H1424 L1419.5,765Z" fill="#444" stroke="#999"/>
<rect x="1303" y="751" width="101" height="24.5" rx="2" fill="#434343" stroke="#505050"/><text class="m" style="font-size:11px;fill:#bdbdbd" x="1308.3" y="768" textLength="72.7" lengthAdjust="spacingAndGlyphs">No Anim Layer</text>
<rect x="1432" y="751" width="100.5" height="24.5" rx="2" fill="#434343" stroke="#505050"/><text class="m" style="font-size:11px;fill:#bdbdbd" x="1437.4" y="768" textLength="85.5" lengthAdjust="spacingAndGlyphs">No Character Set</text>
<path d="M1543,763 A7,7 0 0 1 1556,759 M1557,763 A7,7 0 0 1 1544,768" fill="none" stroke="#bdbdbd" stroke-width="1.1"/><path d="M1549.5,758 V768 M1545.5,763 H1553.5" stroke="#e2954e" stroke-width="1"/>
<circle cx="1572" cy="758" r="3" fill="none" stroke="#bdbdbd" stroke-width="1.4"/>
<path d="M1581,759 L1577,763 L1573,765 M1578,762 L1586,764 M1577,763 L1580,771 M1577,764 L1573,771" stroke="#e2954e" stroke-width="1.8" fill="none"/><circle cx="1584" cy="757" r="2" fill="#e2954e"/>

<!-- MEL -->
<text x="28.2" y="801" textLength="20.7" lengthAdjust="spacingAndGlyphs" style="font-size:11.5px;fill:#dcdcdc">MEL</text>
<rect x="63" y="785" width="508" height="23" rx="2" fill="#2b2b2b"/>
<rect x="577.5" y="784" width="990" height="25" fill="#2b2b2b"/>
<rect x="1573" y="787" width="18" height="19" fill="#c0c0c0"/><rect x="1573" y="790" width="18" height="1" fill="#444"/>
<text x="1575.5" y="802" style="font-size:10px;font-weight:bold;fill:#333">{;}</text>
<path d="M0,813.5 H1600" stroke="#303030"/>
<text x="29.3" y="829.5" textLength="118.8" lengthAdjust="spacingAndGlyphs" style="font-size:10.5px;fill:#b8b8b8">Select Tool: select an object</text>
</svg>
<script>
(function(){
var g=-.3267,h=-.3245,Bx=682.5,By=356.3,Ux=-795,Uy=-251.7,Vx=2162,Vy=-256.7;
function P(u,v){var w=1+u*g+v*h;return[(Bx+u*g*Ux+v*h*Vx)/w,(By+u*g*Uy+v*h*Vy)/w]}
var out=document.getElementById('grid'),NS='http://www.w3.org/2000/svg';
var X0=2,X1=1362,Y0=159,Y1=709;
function L(a,b,c,wd){
  var dx=b[0]-a[0],dy=b[1]-a[1],t0=0,t1=1,p=[-dx,dx,-dy,dy],q=[a[0]-X0,X1-a[0],a[1]-Y0,Y1-a[1]];
  for(var k=0;k<4;k++){
    if(p[k]==0){if(q[k]<0)return;}
    else{var r=q[k]/p[k];if(p[k]<0){if(r>t1)return;if(r>t0)t0=r;}else{if(r<t0)return;if(r<t1)t1=r;}}
  }
  var l=document.createElementNS(NS,'line');
  l.setAttribute('x1',a[0]+t0*dx);l.setAttribute('y1',a[1]+t0*dy);l.setAttribute('x2',a[0]+t1*dx);l.setAttribute('y2',a[1]+t1*dy);
  l.setAttribute('stroke',c);l.setAttribute('stroke-width',wd);out.appendChild(l);
}
for(var i=0;i<=24;i++){var m=i==12,c=m?'#3e3e3e':'#454545',wd=m?1.5:.85;
L(P(i/24,0),P(i/24,1),c,wd);L(P(0,i/24),P(1,i/24),c,wd)}
})();
</script>
</body></html>
